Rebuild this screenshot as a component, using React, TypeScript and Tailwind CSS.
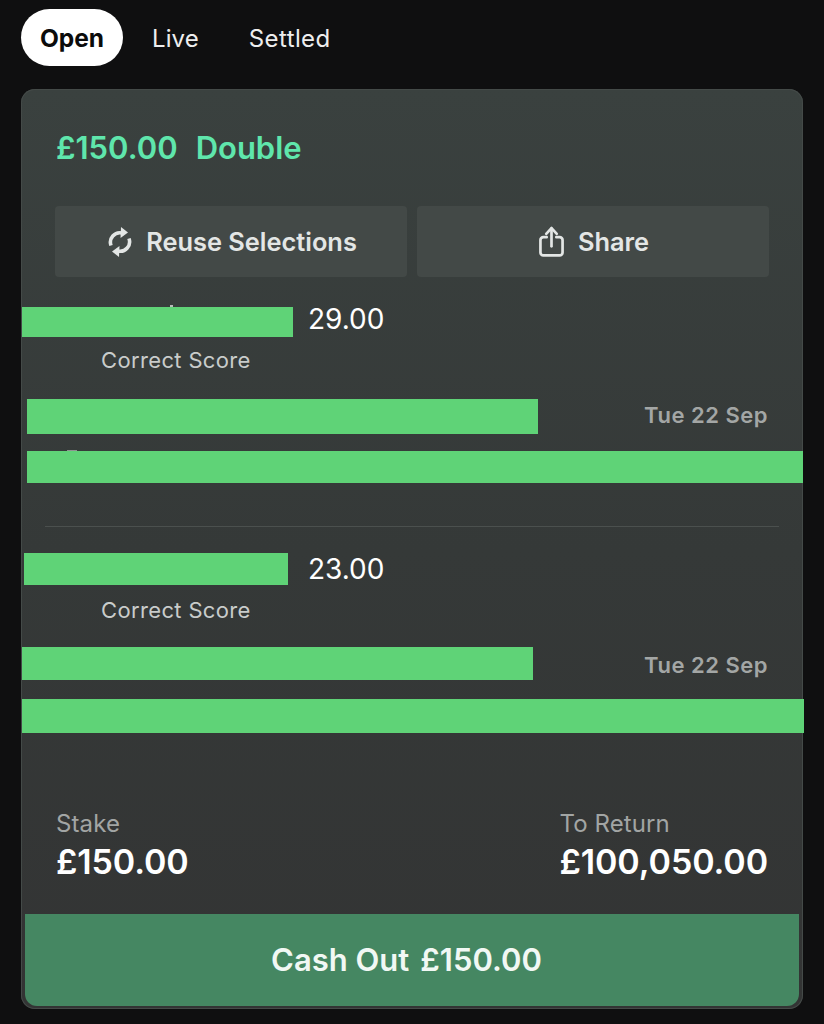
const FONT = "font-['Inter','Liberation_Sans',sans-serif]";

function ReuseIcon() {
  return (
    <svg viewBox="0 0 24 30" className="ml-[3px] h-[30px] w-[24px]" fill="none" stroke="currentColor" strokeWidth="3.6">
      <path d="M3 18.5 A9.5 9.5 0 0 1 14 6" />
      <path d="M21 11.5 A9.5 9.5 0 0 1 10 24" />
      <path d="M13 0 L20 5.5 L12.5 11 Z" fill="currentColor" stroke="none" />
      <path d="M11 30 L4 24.5 L11.5 19 Z" fill="currentColor" stroke="none" />
    </svg>
  );
}

function ShareIcon() {
  return (
    <svg viewBox="0 0 26 32" className="ml-[2px] h-[31px] w-[25px]" fill="none" stroke="currentColor" strokeWidth="2.8" strokeLinecap="round" strokeLinejoin="round">
      <path d="M8 11.5 H4.5 A3 3 0 0 0 1.5 14.5 V27.5 A3 3 0 0 0 4.5 30.5 H21.5 A3 3 0 0 0 24.5 27.5 V14.5 A3 3 0 0 0 21.5 11.5 H18" />
      <path d="M13 21 V2.5" />
      <path d="M7.5 8 L13 2 L18.5 8" />
    </svg>
  );
}

function ActionButton({ icon, label, gap }: { icon: React.ReactNode; label: string; gap: string }) {
  return (
    <button type="button" className={`flex h-[71px] flex-1 items-center justify-center rounded bg-[#434947] text-[25.4px] font-semibold text-[#e3e6e5] ${gap}`}>
      {icon}
      <span className="pt-[2px]">{label}</span>
    </button>
  );
}

function Leg({ odds }: { odds: string }) {
  return (
    <div className="flex flex-col">
      <div className="h-[38px] pl-[283px] text-[28px] leading-[38px] text-white">{odds}</div>
      <div className="mt-[7px] h-[30px] pl-[76px] text-[22px] leading-[30px] tracking-[0.35px] text-[#c9cccb]">Correct Score</div>
      <div className="mt-[25px] h-[30px] pr-[31px] text-right text-[22px] font-semibold leading-[30px] tracking-[0.5px] text-[#a3a6a5]">Tue 22 Sep</div>
    </div>
  );
}

function Total({ label, value }: { label: string; value: string }) {
  return (
    <div className="flex flex-col">
      <span className="text-[24px] leading-[30px] tracking-[0.1px] text-[#a2a5a4]">{label}</span>
      <span className="mt-[2px] text-[34px] font-semibold leading-[42px] tracking-[-0.1px] text-white">{value}</span>
    </div>
  );
}

export default function App() {
  return (
    <div className={`h-[1024px] w-[824px] overflow-hidden bg-[#0f0f10] pl-[21px] pt-[9px] ${FONT}`}>
      {/* Tabs */}
      <div className="flex h-[57px] items-center text-[24px] text-[#eeeeee]">
        <span className="flex h-[57px] w-[102px] items-center justify-center rounded-full bg-white pt-[1px] text-[24.5px] font-bold text-[#0b0b0b]">Open</span>
        <span className="ml-[29px] pt-[2px] tracking-[0.1px]">Live</span>
        <span className="ml-[50px] pt-[2px] tracking-[0.4px]">Settled</span>
      </div>

      {/* Bet card */}
      <div className="relative mt-[23px] flex h-[920px] w-[782px] flex-col rounded-[14px] bg-gradient-to-b from-[#3a413f] via-[#353938] to-[#333434] px-[4px] pb-[3px] shadow-[inset_0_0_0_1px_#444a48]">
        <div className="pl-[31px] pt-[38px] text-[31px] font-semibold leading-[42px] text-[#5fe6ac]">
          £150.00<span className="ml-[18px]">Double</span>
        </div>

        <div className="mt-[37px] flex gap-[10px] px-[30px]">
          <ActionButton icon={<ReuseIcon />} label="Reuse Selections" gap="gap-[14px]" />
          <ActionButton icon={<ShareIcon />} label="Share" gap="gap-[14px]" />
        </div>

        <div className="mt-[23px]">
          <Leg odds="29.00" />
        </div>
        <div className="mx-[20px] mt-[96px] h-px bg-[#4b504e]" />
        <div className="mt-[23px]">
          <Leg odds="23.00" />
        </div>

        <div className="mt-auto flex justify-between px-[31px]">
          <Total label="Stake" value="£150.00" />
          <Total label="To Return" value="£100,050.00" />
        </div>

        <button type="button" className="mt-[31px] flex h-[92px] shrink-0 items-center justify-center gap-[11px] rounded-b-[12px] bg-[#458762] pr-[11px] text-[31px] font-semibold text-[#f1f8f4]">
          <span>Cash Out</span>
          <span>£150.00</span>
        </button>

        {/* Redaction bars */}
        <div className="absolute left-[149px] top-[216px] h-[2px] w-[3px] bg-[#b9bcbb]" />
        <div className="absolute left-[46px] top-[361px] h-px w-[10px] bg-[#8f9392]" />
        <div className="absolute left-[1px] top-[218px] h-[30px] w-[271px] bg-[#5fd377]" />
        <div className="absolute left-[6px] top-[310px] h-[35px] w-[511px] bg-[#5fd377]" />
        <div className="absolute left-[6px] top-[362px] h-[32px] w-[776px] bg-[#5fd377]" />
        <div className="absolute left-[3px] top-[464px] h-[32px] w-[264px] bg-[#5fd377]" />
        <div className="absolute left-[1px] top-[558px] h-[33px] w-[511px] bg-[#5fd377]" />
        <div className="absolute left-[1px] top-[610px] h-[34px] w-[782px] bg-[#5fd377]" />
      </div>
    </div>
  );
}
